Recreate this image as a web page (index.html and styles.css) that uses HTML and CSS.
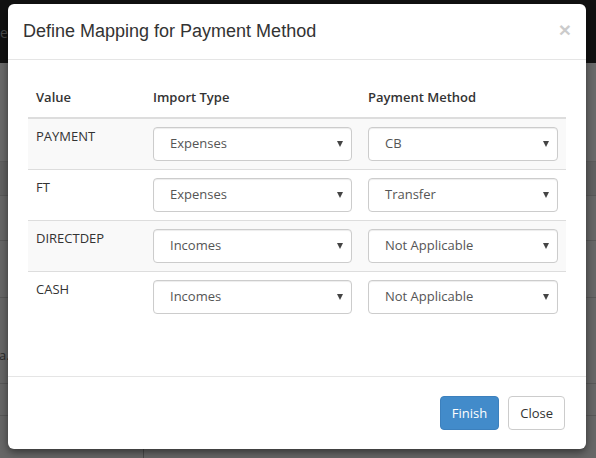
FILE: index.html
```html
<!DOCTYPE html>
<html>
<head>
<meta charset="utf-8">
<link rel="stylesheet" href="styles.css">
</head>
<body>
<div class="page">
  <div class="navbar"><span class="nav-text">e</span></div>
  <div class="content">
    <div class="band"></div>
    <div class="bg-row r1"></div>
    <div class="bg-row r2"></div>
    <div class="bg-row r3"></div>
    <div class="bg-row r4"><span class="bg-text">a.</span></div>
    <div class="bg-row r5"></div>
    <div class="bg-row r6"><span class="vline"></span></div>
  </div>
</div>

<div class="modal">
  <div class="modal-header">
    <h4 class="modal-title">Define Mapping for Payment Method</h4>
    <span class="close">×</span>
  </div>
  <div class="modal-body">
    <table class="map-table">
      <colgroup>
        <col class="c1"><col class="c2"><col class="c3">
      </colgroup>
      <thead>
        <tr><th>Value</th><th>Import Type</th><th>Payment Method</th></tr>
      </thead>
      <tbody>
        <tr class="odd">
          <td>PAYMENT</td>
          <td><div class="sel">Expenses<span class="caret"></span></div></td>
          <td><div class="sel">CB<span class="caret"></span></div></td>
        </tr>
        <tr>
          <td>FT</td>
          <td><div class="sel">Expenses<span class="caret"></span></div></td>
          <td><div class="sel">Transfer<span class="caret"></span></div></td>
        </tr>
        <tr class="odd">
          <td>DIRECTDEP</td>
          <td><div class="sel">Incomes<span class="caret"></span></div></td>
          <td><div class="sel">Not Applicable<span class="caret"></span></div></td>
        </tr>
        <tr>
          <td>CASH</td>
          <td><div class="sel">Incomes<span class="caret"></span></div></td>
          <td><div class="sel">Not Applicable<span class="caret"></span></div></td>
        </tr>
      </tbody>
    </table>
  </div>
  <div class="modal-footer">
    <button class="btn btn-primary">Finish</button>
    <button class="btn btn-default">Close</button>
  </div>
</div>
</body>
</html>
```

FILE: styles.css
```css
html, body {
  margin: 0;
  padding: 0;
}
body {
  width: 596px;
  height: 458px;
  overflow: hidden;
  background: #666;
  font-family: "Open Sans", "Liberation Sans", sans-serif;
}
.page {
  display: flex;
  flex-direction: column;
  height: 458px;
}
.navbar {
  height: 63px;
  background: #111;
  display: flex;
  align-items: center;
}
.nav-text {
  font-size: 14px;
  color: #4a4a4a;
  margin-left: 0;
  margin-top: 2px;
}
.content {
  flex: 1;
  display: flex;
  flex-direction: column;
  background: #676767;
}
.band {
  height: 98px;
  background: #6a6a6a;
  border-bottom: 1px solid #5c5c5c;
}
.bg-row {
  border-bottom: 1px solid #585858;
  position: relative;
}
.r1 { height: 33px; background: #616161; }
.r2 { height: 44px; }
.r3 { height: 56px; }
.r4 { height: 85px; }
.r5 { height: 31px; }
.r6 { flex: 1; border-bottom: none; }
.bg-text {
  position: absolute;
  left: -1px;
  top: 48px;
  font-size: 13px;
  color: #2a2a2a;
}
.vline {
  position: absolute;
  left: 143px;
  top: 30px;
  height: 20px;
  border-left: 1px solid #4a4a4a;
}

.modal {
  position: absolute;
  left: 8px;
  top: 4px;
  width: 578px;
  height: 445px;
  background: #fff;
  border-radius: 6px;
  box-shadow: 0 3px 9px rgba(0, 0, 0, 0.5);
  display: flex;
  flex-direction: column;
}
.modal-header {
  display: flex;
  align-items: center;
  justify-content: space-between;
  height: 55px;
  padding: 0 15px;
  border-bottom: 1px solid #e5e5e5;
}
.modal-title {
  margin: 0;
  font-family: "Liberation Sans", Arial, sans-serif;
  font-weight: normal;
  font-size: 18px;
  color: #333;
}
.close {
  font-family: "Liberation Sans", Arial, sans-serif;
  font-size: 21px;
  font-weight: bold;
  color: #000;
  opacity: 0.2;
  margin-top: -4px;
  line-height: 1;
}
.modal-body {
  flex: 1;
  padding: 20px;
}
.map-table {
  width: 538px;
  border-collapse: collapse;
  table-layout: fixed;
  font-size: 13px;
  color: #333;
}
.c1 { width: 117px; }
.c2 { width: 215px; }
.c3 { width: 206px; }
.map-table th {
  text-align: left;
  font-weight: 600;
  padding: 8px 8px 10px;
  line-height: 18.6px;
  border-bottom: 2px solid #ddd;
}
.map-table td {
  padding: 8px;
  line-height: 18.6px;
  vertical-align: top;
  border-top: 1px solid #ddd;
}
.map-table thead + tbody tr:first-child td {
  border-top: none;
}
.map-table tr.odd td {
  background: #f9f9f9;
}
.sel {
  box-sizing: border-box;
  height: 34px;
  border: 1px solid #ccc;
  border-radius: 4px;
  background: #fff;
  color: #555;
  padding: 0 8px 0 16px;
  display: flex;
  align-items: center;
  justify-content: space-between;
  box-shadow: inset 0 1px 1px rgba(0, 0, 0, 0.075);
}
.caret {
  width: 0;
  height: 0;
  border-left: 3.5px solid transparent;
  border-right: 3.5px solid transparent;
  border-top: 6px solid #444;
  margin-top: 1px;
}
.modal-footer {
  display: flex;
  justify-content: flex-end;
  align-items: flex-start;
  gap: 9px;
  height: 73px;
  box-sizing: border-box;
  padding: 19px 21px 0 0;
  border-top: 1px solid #e5e5e5;
}
.btn {
  font-family: "Open Sans", sans-serif;
  font-size: 13px;
  height: 34px;
  padding: 0 11px;
  border-radius: 4px;
  border: 1px solid transparent;
  cursor: pointer;
}
.btn-primary {
  background: #428bca;
  border-color: #3c80bd;
  color: #fff;
}
.btn-default {
  background: #fff;
  border-color: #ccc;
  color: #333;
}
```
